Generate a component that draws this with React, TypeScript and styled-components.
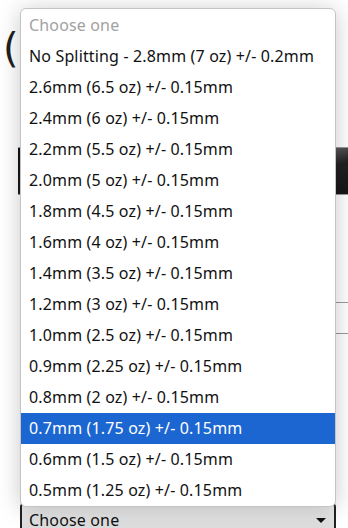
import React from "react";
import styled, { createGlobalStyle } from "styled-components";

const Global = createGlobalStyle`
  html, body { margin: 0; padding: 0; background: #ffffff; }
  body { font-family: "Noto Sans", "DejaVu Sans", sans-serif; overflow: hidden; }
`;

const Page = styled.div`
  position: relative;
  width: 348px;
  height: 528px;
  overflow: hidden;
  background: #ffffff;
`;

const Form = styled.div`
  display: flex;
  flex-direction: column;
  padding: 0 0 0 20px;
  width: 360px;
`;

const Title = styled.h1`
  margin: 24px 0 0 -17px;
  font-family: "DejaVu Sans", sans-serif;
  font-weight: 500;
  font-size: 40px;
  line-height: 48px;
  color: #1f1f1f;
  span { color: #c98a2b; }
`;

const Banner = styled.div`
  margin-top: 75px;
  margin-left: -2px;
  height: 46px;
  border-top: 1px solid #999;
  border-bottom: 1px solid #999;
  background: linear-gradient(160deg, #111 0%, #222 40%, #777 60%, #222 75%, #111 100%);
`;

const Field = styled.div`
  margin-top: 107px;
  height: 30px;
  border-top: 1px solid #9a9a9a;
  border-bottom: 1px solid #9a9a9a;
  display: flex;
  align-items: center;
  justify-content: flex-end;
  padding-right: 4px;
  font-size: 15px;
  color: #1a3a8a;
`;

const Label = styled.div`
  margin-top: 120px;
  display: flex;
  justify-content: flex-end;
  padding-right: 5px;
  font-size: 13px;
  color: #b03030;
`;

const Select = styled.div`
  margin-top: 30px;
  width: 316px;
  height: 34px;
  box-sizing: border-box;
  border: 2px solid #222;
  border-radius: 5px;
  background: linear-gradient(#eeeeee, #d8d8d8);
  display: flex;
  align-items: center;
  justify-content: space-between;
  padding: 2px 8px 0 7px;
  font-family: "Noto Sans", sans-serif;
  font-size: 16px;
  letter-spacing: 0.15px;
  color: #111;
`;

const Arrow = styled.span`
  width: 0;
  height: 0;
  border-left: 5px solid transparent;
  border-right: 5px solid transparent;
  border-top: 5px solid #111;
`;

const Popup = styled.ul`
  position: absolute;
  left: 20px;
  top: 8px;
  width: 316px;
  margin: 0;
  padding: 1px 0 0;
  list-style: none;
  box-sizing: border-box;
  background: #fff;
  border: 1px solid #c4c4c4;
  border-radius: 6px;
  box-shadow: 0 2px 22px rgba(0, 0, 0, 0.22);
  overflow: hidden;
`;

const Option = styled.li<{ $selected?: boolean; $placeholder?: boolean }>`
  height: 31px;
  box-sizing: border-box;
  display: flex;
  align-items: center;
  padding: 0 0 2px 8px;
  font-family: "Noto Sans", sans-serif;
  font-size: 16px;
  letter-spacing: 0.15px;
  white-space: nowrap;
  background: ${(p) => (p.$selected ? "#1c66d2" : "transparent")};
  color: ${(p) => (p.$selected ? "#ffffff" : p.$placeholder ? "#a2a2a2" : "#111111")};
`;

const options = [
  "No Splitting - 2.8mm (7 oz) +/- 0.2mm",
  "2.6mm (6.5 oz) +/- 0.15mm",
  "2.4mm (6 oz) +/- 0.15mm",
  "2.2mm (5.5 oz) +/- 0.15mm",
  "2.0mm (5 oz) +/- 0.15mm",
  "1.8mm (4.5 oz) +/- 0.15mm",
  "1.6mm (4 oz) +/- 0.15mm",
  "1.4mm (3.5 oz) +/- 0.15mm",
  "1.2mm (3 oz) +/- 0.15mm",
  "1.0mm (2.5 oz) +/- 0.15mm",
  "0.9mm (2.25 oz) +/- 0.15mm",
  "0.8mm (2 oz) +/- 0.15mm",
  "0.7mm (1.75 oz) +/- 0.15mm",
  "0.6mm (1.5 oz) +/- 0.15mm",
  "0.5mm (1.25 oz) +/- 0.15mm",
];

export default function App() {
  return (
    <Page>
      <Global />
      <Form>
        <Title>
          (<span>l</span>
        </Title>
        <Banner />
        <Field>m</Field>
        <Label>*</Label>
        <Select>
          <span>Choose one</span>
          <Arrow />
        </Select>
      </Form>
      <Popup>
        <Option $placeholder>Choose one</Option>
        {options.map((o) => (
          <Option key={o} $selected={o.startsWith("0.7mm")}>
            {o}
          </Option>
        ))}
      </Popup>
    </Page>
  );
}
